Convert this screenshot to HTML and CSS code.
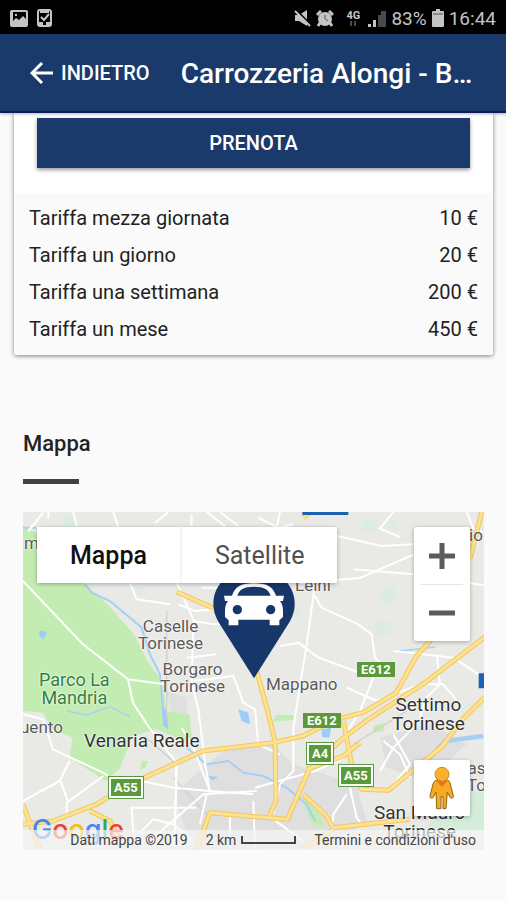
FILE: index.html
```html
<!DOCTYPE html>
<html lang="it">
<head>
	<meta charset="UTF-8">
	<meta name="viewport" content="width=device-width, initial-scale=1">
	<title>Carrozzeria Alongi</title>
	<link rel="stylesheet" href="styles.css">
</head>
<body>
	<div class="status-bar">
		<div class="status-left">
			<svg width="18" height="17" viewBox="0 0 18 17"><path fill="#c4c4c4" fill-rule="evenodd" d="M2 0h14a2 2 0 0 1 2 2v13a2 2 0 0 1-2 2H2a2 2 0 0 1-2-2V2a2 2 0 0 1 2-2zM3 2v9l3-3 3 2 4-4 3 3V2zM5 4h2v2H5z"/></svg>
			<svg width="15" height="18" viewBox="0 0 15 18"><rect x="1" y="1" width="13" height="16" rx="2" fill="none" stroke="#c4c4c4" stroke-width="2"/><path d="M4 8l3 3 5-6" fill="none" stroke="#c4c4c4" stroke-width="2"/><path fill="#c4c4c4" d="M3 2h9v2H3zM2 13h4v3H2zM9 13h4v3H9z"/></svg>
		</div>
		<div class="status-right">
			<svg width="17" height="17" viewBox="0 0 17 17"><path fill="#c4c4c4" d="M1 5h4l8-5v16l-8-5H1z"/><path d="M2 0l15 15" stroke="#000" stroke-width="2"/><path d="M1 1l15 15" stroke="#c4c4c4" stroke-width="2"/></svg>
			<svg width="18" height="17" viewBox="0 0 18 17"><circle cx="9" cy="9" r="7" fill="#c4c4c4"/><path d="M1 5l4-4M17 5l-4-4M4 13l-2 3M14 13l2 3" stroke="#c4c4c4" stroke-width="3"/><path d="M9 5v4l3 2" fill="none" stroke="#555" stroke-width="1"/></svg>
			<span class="network">4G<svg width="10" height="5" viewBox="0 0 10 5"><path fill="#4a4a4a" d="M2 0h2v5H2zM6 0h2v5H6z"/></svg></span>
			<svg width="18" height="17" viewBox="0 0 18 17"><path fill="#c4c4c4" d="M0 14h3v3H0zM5 10h3v7H5z"/><path fill="#4a4a4a" d="M10 5h3v12h-3zM13 1h5v16h-5z"/></svg>
			<span>83%</span>
			<svg width="12" height="18" viewBox="0 0 12 18"><path fill="#c4c4c4" d="M4 0h4v2h3a1 1 0 0 1 1 1v14a1 1 0 0 1-1 1H1a1 1 0 0 1-1-1V3a1 1 0 0 1 1-1h3z"/><path stroke="#555" d="M1 5h10"/></svg>
			<span>16:44</span>
		</div>
	</div>

	<header class="navbar">
		<button type="button" class="back">
			<svg width="24" height="24" viewBox="0 0 24 24"><path d="M23 12H2M12 2L2 12l10 10" fill="none" stroke="#fff" stroke-width="3"/></svg>
			INDIETRO
		</button>
		<h1 class="title">Carrozzeria Alongi - B…</h1>
	</header>

	<main>
		<section class="card">
			<div class="card-action">
				<button type="button" class="book">PRENOTA</button>
			</div>
			<div class="card-prices">
				<table class="prices">
					<tbody>
						<tr>
							<td>Tariffa mezza giornata</td>
							<td>10 €</td>
						</tr>
						<tr>
							<td>Tariffa un giorno</td>
							<td>20 €</td>
						</tr>
						<tr>
							<td>Tariffa una settimana</td>
							<td>200 €</td>
						</tr>
						<tr>
							<td>Tariffa un mese</td>
							<td>450 €</td>
						</tr>
					</tbody>
				</table>
			</div>
		</section>

		<section class="map-section">
			<h2 class="map-title">Mappa</h2>
			<div class="map">
				<!-- terrain and roads -->
				<svg class="map-tiles" viewBox="9 23 1383 1014" preserveAspectRatio="xMinYMin slice">
					<rect x="9" y="23" width="1800" height="1014" fill="#e9e9e6"/>
					<path fill="#dfdfdf" d="M620 730l140-10 60 60 190 60 30 110-120 80-400 10-60-170zM1080 700l150-40 110 60-120 110-120-40zM440 560l60 20v60l-40 20z"/>
					<path fill="#c3ecb2" d="M9 65l43 25 140 145 70 65 80 90 40 80 48 65 8 85 70 10 10 90-110-45-70 20-40 100-40 35-110-70 10-60-60-25-30-50-59-5zM768 632h60l-10 15-60 5zM365 770h20l-10 20-15 5zM840 870l60 60 15 40-40-10zM1060 665l35-10-5 25-30 5z"/>
					<path fill="#d4edda" d="M1345 860h60v120h-200l60-50z"/>
					<g fill="#d9eede" opacity=".7">
						<circle cx="1045" cy="65" r="22"/>
						<circle cx="1120" cy="65" r="15"/>
						<circle cx="1105" cy="270" r="26"/>
						<circle cx="1090" cy="370" r="24"/>
						<circle cx="820" cy="320" r="20"/>
						<circle cx="150" cy="55" r="20"/>
						<circle cx="360" cy="260" r="14"/>
					</g>
					<g class="water">
						<path d="M195 240l20 25 55 25 60 50 35 30 25 80 30 60 10 120M9 70h40"/>
						<path d="M500 730l60 50 65-10 45 35 60 10 70 35 60 50 25 50"/>
						<path d="M1225 765l50-55 115-15" stroke-width="13"/>
						<path d="M1140 440l105-12M140 620l60 12 70-25 60 30" stroke-width="4"/>
					</g>
					<path fill="#9ecbfa" d="M655 615l30 10 5 35-25-10zM905 675l28-5-5 30-22-2zM58 378l22 5-8 22-14-10zM565 815l28 2-15 12zM425 610l15 5 5 60-15-10z"/>
					<path d="M440 320v320M460 820l100 110M1000 720l160-100M380 700l90 80" class="rail"/>
					<g class="streets">
						<path d="M9 230l180 190 135 105 110 15M324 525l15 70 45 70 85 110-5 250M25 80l45-55M85 23v20M405 55l40-32M280 23l15 45M160 23l10 42M515 30v35M560 23l55 42M600 23l55 42"/>
						<path d="M330 235l20 50 100 15M470 235l50 110-5 190 20 80 20 160 15 90M475 300l50 20 60-5M520 350l60 10h20M500 460l90-10M520 530l120-15 30 80 35 20 10 105 65 30M545 250h60l20 20"/>
						<path d="M715 40l60 30 45-10M780 23l-10 45M885 80l200 45 95-5M840 236l180-15 160-70M1000 195l180 15M885 275l20 35 110 50 40 30 10 70 50 50M885 240l-25 180-40 250v130l-40 40M780 425l55-10 60 45 110 40 60 20M1120 23l-40 50 60 25M1340 23l20 50 30 10M1345 235l45 8"/>
						<path d="M1120 440l90 10 90 10 90 60M1250 450l10 90-40 40-20 60M1060 520l-40 100-50 80M980 550l90 40 130-50h70l50 60M1090 710l50 40 30 70M1120 690l50 90-50 60M1180 670l-60 60-40 70M980 870l-40 60-5 60M990 850l20 90 15 20"/>
						<path d="M9 630l60 15 30 90 150 70 15 10M9 890l110-60 30-60M120 825l25 70M250 815l-110 80v40M320 820l140 30 110 10 130 10M330 910h200M335 910l5 80M470 785l-5 170M400 1000l150-130 160-10M360 985l40-40 60 15 60 50M570 860l-50-130-35-60M540 960l20-90M630 930v100M700 890l5 140M705 850l180-50 90-40M780 840l-20 90M740 930l110 80M1230 770l40 90"/>
					</g>
					<g>
						<path class="road-edge" d="M9 960l90-10 130-50 100-60 220-100 210-25 90-20 100-50 80-20 100-60 60-110 100-110M800 950l65-150 100-95 80-60 170-110 190-145M470 262l110 50M710 500l30 110 25 100 3 180-20 45M530 1035l40-110 230 20M970 650l25 130 15 50 15 25 80 3 160-130 60-80 70-70M850 40l20-17M1385 23l-35 140M850 870l65 60 25 40 230-25M860 795l110-40 50-40M9 900l50 135M850 1035l90-60M210 920l60 30 30 60"/>
						<path class="road" d="M9 960l90-10 130-50 100-60 220-100 210-25 90-20 100-50 80-20 100-60 60-110 100-110M800 950l65-150 100-95 80-60 170-110 190-145M470 262l110 50M710 500l30 110 25 100 3 180-20 45M530 1035l40-110 230 20M970 650l25 130 15 50 15 25 80 3 160-130 60-80 70-70M850 40l20-17M1385 23l-35 140M850 870l65 60 25 40 230-25M860 795l110-40 50-40M9 900l50 135M850 1035l90-60M210 920l60 30 30 60"/>
					</g>
					<path fill="#1c62b0" d="M847 23h138v9H847zM1376 507h16v45h-16z"/>
				</svg>

				<span class="place place-m">m</span>
				<span class="place place-io">io</span>
				<span class="place place-leini">Leini</span>
				<span class="place place-caselle">Caselle<br>Torinese</span>
				<span class="place place-borgaro">Borgaro<br>Torinese</span>
				<span class="place place-mappano">Mappano</span>
				<span class="place place-druento">uento</span>
				<span class="place park place-mandria">Parco La<br>Mandria</span>
				<span class="place town place-venaria">Venaria Reale</span>
				<span class="place town place-settimo">Settimo<br>Torinese</span>
				<span class="place town place-mauro">San Mauro<br>Torinese</span>
				<span class="place place-gassino">as<br>To</span>

				<span class="shield e612-north">E612</span>
				<span class="shield e612-south">E612</span>
				<span class="shield framed a4">A4</span>
				<span class="shield framed a55-east">A55</span>
				<span class="shield framed a55-west">A55</span>

				<svg class="marker" width="82" height="110" viewBox="0 0 246 330">
					<path fill="#17366a" d="M123 328L16 158C5 138 1 122 1 104 1 42 55 0 123 0s122 42 122 104c0 18-4 34-15 54z"/>
					<path fill="#fff" fill-rule="evenodd" d="M33 80h24c10-26 24-37 66-37s56 11 66 37h24l-3 16h-9c8 10 9 20 9 34v14l-11 10v15h-29v-17H76v17H47v-15l-11-10v-14c0-14 1-24 9-34h-9zM73 80h100c-7-19-18-27-50-27s-43 8-50 27zM73 108a14 14 0 1 0 0 28 14 14 0 0 0 0-28zM173 108a14 14 0 1 0 0 28 14 14 0 0 0 0-28z"/>
				</svg>

				<div class="map-types">
					<button type="button" class="active">Mappa</button>
					<button type="button">Satellite</button>
				</div>

				<div class="zoom">
					<button type="button" aria-label="Zoom avanti"><svg width="26" height="26" viewBox="0 0 26 26"><path d="M0 13h26M13 0v26" stroke="#5c5c5c" stroke-width="5"/></svg></button>
					<button type="button" aria-label="Zoom indietro"><svg width="26" height="26" viewBox="0 0 26 26"><path d="M0 13h26" stroke="#5c5c5c" stroke-width="5"/></svg></button>
				</div>

				<button type="button" class="pegman" aria-label="Street View">
					<svg width="26" height="44" viewBox="0 0 78 132">
						<path d="M27 42h24c8 0 11 4 13 12l9 36c1 7-7 9-10 4l-8-16-4 50H42V92h-6v36H23l-2-50-8 16c-3 5-11 3-10-4l9-36c2-8 7-12 15-12z" fill="#f9a825" stroke="#8a6914" stroke-width="3"/>
						<path d="M22 44h34L39 62z" fill="#e8711c"/>
						<circle cx="39" cy="25" r="21" fill="#fbb02d" stroke="#c98a1b" stroke-width="3"/>
					</svg>
				</button>

				<a class="google" href="#"><span class="blue">G</span><span class="red">o</span><span class="yellow">o</span><span class="blue">g</span><span class="green">l</span><span class="red">e</span></a>
				<div class="attribution">
					<span>Dati mappa ©2019</span>
					<span class="scale">2 km <i></i></span>
					<a href="#">Termini e condizioni d'uso</a>
				</div>
			</div>
		</section>
	</main>
</body>
</html>
```
FILE: styles.css
```css
* {
	box-sizing: border-box;
}
body {
	margin: 0;
	background: #fafafa;
	color: #222;
	font-family: Roboto, "Liberation Sans", sans-serif;
	font-size: 20px;
}
button {
	border: 0;
	padding: 0;
	font-family: inherit;
	cursor: pointer;
}
svg {
	display: block;
}

/* status bar */
.status-bar {
	display: flex;
	justify-content: space-between;
	align-items: center;
	height: 34px;
	padding: 2px 10px 0;
	background: #000;
	color: #c4c4c4;
	font-size: 19px;
}
.status-left,
.status-right {
	display: flex;
	align-items: center;
}
.status-left {
	gap: 9px;
}
.status-right {
	gap: 5px;
}
.network {
	width: 20px;
	margin-left: 4px;
	font-size: 11px;
	font-weight: 700;
	line-height: 11px;
	text-align: center;
}
.network svg {
	margin: 0 auto;
}

/* navbar */
.navbar {
	display: flex;
	align-items: center;
	gap: 31px;
	height: 79px;
	padding: 1px 30px 0;
	background: #1a3a6b;
	border-bottom: 2px solid #0c1c5c;
	box-shadow: 0 1px 3px rgba(0, 0, 0, .3);
	position: relative;
	color: #fff;
}
.back {
	display: flex;
	align-items: center;
	gap: 7px;
	background: none;
	color: #fff;
	font-size: 20px;
	font-weight: 500;
}
.title {
	margin: 0;
	font-size: 28px;
	font-weight: 500;
	white-space: nowrap;
}

/* price card */
.card {
	margin: 0 13px 0 14px;
	background: #fff;
	border-radius: 0 0 3px 3px;
	box-shadow: 0 1px 4px rgba(0, 0, 0, .5);
}
.card-action {
	padding: 5px 23px 25px;
}
.book {
	display: block;
	width: 100%;
	height: 50px;
	background: #1a3a6b;
	box-shadow: 0 2px 4px rgba(0, 0, 0, .4);
	color: #fff;
	font-size: 20px;
	font-weight: 500;
}
.card-prices {
	padding: 6px 15px 8px;
	background: #fafafa;
	border-radius: 0 0 3px 3px;
}
.prices {
	width: 100%;
	border-collapse: collapse;
}
.prices td {
	height: 37px;
	padding: 0;
}
.prices td:last-child {
	text-align: right;
}

/* map */
.map-section {
	padding: 76px 22px 50px 23px;
}
.map-title {
	margin: 0 0 28px;
	font-size: 22px;
	font-weight: 500;
	line-height: 26px;
}
.map-title::after {
	content: "";
	display: block;
	width: 56px;
	height: 5px;
	margin-top: 22px;
	background: #424242;
}
.map {
	position: relative;
	height: 338px;
	overflow: hidden;
}
.map-tiles {
	width: 100%;
	height: 100%;
}
.water {
	fill: none;
	stroke: #a6cff5;
	stroke-width: 6;
}
.rail {
	fill: none;
	stroke: #d0d0d4;
	stroke-width: 4;
}
.streets {
	fill: none;
	stroke: #fff;
	stroke-width: 6;
	stroke-linejoin: round;
}
.road-edge {
	fill: none;
	stroke: #f1c75c;
	stroke-width: 15;
	stroke-linejoin: round;
}
.road {
	fill: none;
	stroke: #fde293;
	stroke-width: 9;
	stroke-linejoin: round;
}
.place {
	position: absolute;
	color: #5a5a5a;
	font-size: 17px;
	line-height: 17px;
	text-align: center;
	white-space: nowrap;
	text-shadow: 0 0 2px #fff, 0 0 2px #fff;
}
.town {
	color: #333;
	font-size: 19px;
	line-height: 19px;
}
.park {
	color: #2f8040;
	font-size: 18px;
	line-height: 18px;
}
.place-m { left: 1px; top: 23px; }
.place-io { left: 446px; top: 15px; }
.place-leini { left: 272px; top: 65px; }
.place-caselle { left: 115px; top: 106px; }
.place-borgaro { left: 137px; top: 149px; }
.place-mappano { left: 243px; top: 164px; }
.place-druento { left: -3px; top: 207px; }
.place-mandria { left: 16px; top: 159px; }
.place-venaria { left: 61px; top: 219px; }
.place-settimo { left: 369px; top: 183px; }
.place-mauro { left: 351px; top: 291px; }
.place-gassino { left: 444px; top: 248px; }

.shield {
	position: absolute;
	padding: 0 4px;
	background: #5b9a3c;
	color: #fff;
	font-size: 13px;
	font-weight: 700;
	line-height: 15px;
}
.framed {
	padding: 1px 3px;
	border: 2px solid #fff;
	outline: 1px solid #5b9a3c;
}
.e612-north { left: 334px; top: 150px; }
.e612-south { left: 280px; top: 201px; }
.a4 { left: 284px; top: 231px; }
.a55-east { left: 316px; top: 253px; }
.a55-west { left: 86px; top: 265px; }

.marker {
	position: absolute;
	left: 190px;
	top: 57px;
}
.map-types {
	position: absolute;
	left: 14px;
	top: 15px;
	display: flex;
	border-radius: 2px;
	box-shadow: 0 1px 4px rgba(0, 0, 0, .3);
}
.map-types button {
	height: 56px;
	padding: 0 33px;
	background: #fff;
	color: #505050;
	font-size: 25px;
}
.map-types .active {
	border-right: 2px solid #f4f4f4;
	color: #111;
	font-weight: 500;
}
.zoom {
	position: absolute;
	right: 14px;
	top: 15px;
	width: 56px;
	padding: 0 7px;
	background: #fff;
	border-radius: 2px;
	box-shadow: 0 1px 4px rgba(0, 0, 0, .3);
}
.zoom button {
	display: flex;
	align-items: center;
	justify-content: center;
	width: 100%;
	height: 57px;
	background: none;
}
.zoom button + button {
	border-top: 1px solid #e6e6e6;
}
.pegman {
	position: absolute;
	right: 14px;
	bottom: 34px;
	display: flex;
	align-items: center;
	justify-content: center;
	width: 56px;
	height: 56px;
	background: #fff;
	border-radius: 2px;
	box-shadow: 0 1px 4px rgba(0, 0, 0, .3);
}
.google {
	position: absolute;
	left: 9px;
	bottom: 2px;
	font-family: Inter, sans-serif;
	font-size: 27px;
	font-weight: 500;
	line-height: 36px;
	text-decoration: none;
}
.blue { color: #4285f4; }
.red { color: #ea4335; }
.yellow { color: #fbbc05; }
.green { color: #34a853; }
.attribution {
	position: absolute;
	right: 0;
	bottom: 0;
	display: flex;
	justify-content: flex-end;
	gap: 18px;
	padding: 0 8px;
	width: 100%;
	background: rgba(245, 245, 245, .7);
	color: #444;
	font-size: 14px;
	line-height: 20px;
	white-space: nowrap;
}
.attribution a {
	color: #444;
	text-decoration: none;
}
.scale {
	display: flex;
	align-items: center;
	gap: 5px;
}
.scale i {
	width: 55px;
	height: 8px;
	border: 2px solid #444;
	border-top: 0;
}
```
